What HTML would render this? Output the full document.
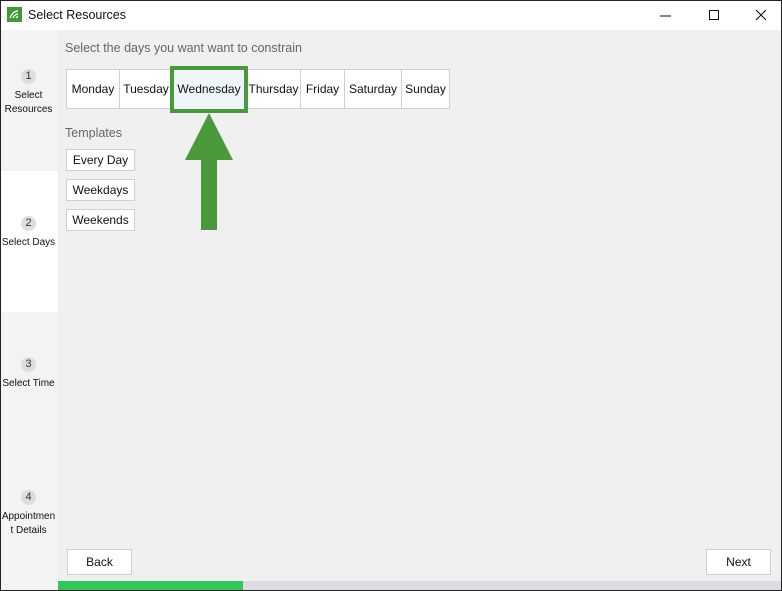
<!DOCTYPE html>
<html><head><style>
*{margin:0;padding:0;box-sizing:border-box}
body{width:782px;height:591px;overflow:hidden;font-family:"Liberation Sans",sans-serif;background:#fff;position:relative}
.win{position:absolute;left:0;top:0;width:782px;height:591px;border:1px solid #222;background:#f0f0f0}
.title{position:absolute;left:0;top:0;width:780px;height:29px;background:#fff;font-size:12.5px;color:#111}
.side{position:absolute;left:0;top:29px;width:57px;height:560px;background:#f3f3f3}
.step{position:absolute;left:-1px;width:57px;text-align:center;font-size:10px;color:#111;line-height:14px}
.num{width:15px;height:15px;border-radius:50%;background:#ddd;margin:0 auto 5px;font-size:11px;line-height:15px;color:#333}
.btn{position:absolute;background:#fff;border:1px solid #ccd0dc;font-size:12px;color:#111;text-align:center}
.day{position:absolute;top:68px;height:40px;background:#fff;border:1px solid #ccd0dc;font-size:12px;line-height:38px;text-align:center;color:#111}
</style></head><body>
<div class="win">
<div class="title">
<div style="position:absolute;left:6px;top:6px;width:15px;height:15px;background:#3d9a3d"><svg width="15" height="15"><path d="M3 11 Q6 4 11 4 M6 11 Q8 7 11 7 M9 11 L11 9" stroke="#fff" stroke-width="1.3" fill="none"/></svg></div>
<div style="position:absolute;left:27px;top:7px">Select Resources</div>
<svg style="position:absolute;left:650px;top:7px" width="120" height="15"><path d="M9 8h11" stroke="#111"/><path d="M58.5 2.5h9v9h-9z" stroke="#111" fill="none"/><path d="M105 2l10 10M115 2l-10 10" stroke="#111"/></svg>
</div>
<div class="side">
<div class="step" style="top:39px"><div class="num">1</div>Select<br>Resources</div>
<div style="position:absolute;left:0;top:141px;width:57px;height:141px;background:#fff"></div>
<div class="step" style="top:186px"><div class="num">2</div>Select Days</div>
<div class="step" style="top:327px"><div class="num">3</div>Select Time</div>
<div class="step" style="top:460px"><div class="num">4</div>Appointmen<br>t Details</div>
</div>
<div style="position:absolute;left:64px;top:40px;font-size:12.5px;color:#666">Select the days you want want to constrain</div>
<div class="day" style="left:65px;width:54px">Monday</div>
<div class="day" style="left:118px;width:54px">Tuesday</div>
<div class="day" style="left:245px;width:55px">Thursday</div>
<div class="day" style="left:299px;width:45px">Friday</div>
<div class="day" style="left:343px;width:58px">Saturday</div>
<div class="day" style="left:400px;width:49px">Sunday</div>
<div class="day" style="left:169px;top:65px;width:78px;height:47px;background:#eef5f8;border:4px solid #4a9a3c;line-height:39px">Wednesday</div>
<svg style="position:absolute;left:184px;top:112px" width="50" height="118"><path d="M24 0L48 47H32V117H16V47H0Z" fill="#4a9a3c"/></svg>
<div style="position:absolute;left:64px;top:125px;font-size:12.5px;color:#666">Templates</div>
<div class="btn" style="left:65px;top:148px;width:69px;height:22px;line-height:20px">Every Day</div>
<div class="btn" style="left:65px;top:178px;width:69px;height:22px;line-height:20px">Weekdays</div>
<div class="btn" style="left:65px;top:208px;width:69px;height:22px;line-height:20px">Weekends</div>
<div class="btn" style="left:66px;top:548px;width:65px;height:26px;line-height:24px">Back</div>
<div class="btn" style="left:705px;top:548px;width:65px;height:26px;line-height:24px">Next</div>
<div style="position:absolute;left:57px;top:580px;width:723px;height:9px;background:#dcdde4"></div>
<div style="position:absolute;left:57px;top:580px;width:185px;height:9px;background:#2fc85a"></div>
</div>
</body></html>
